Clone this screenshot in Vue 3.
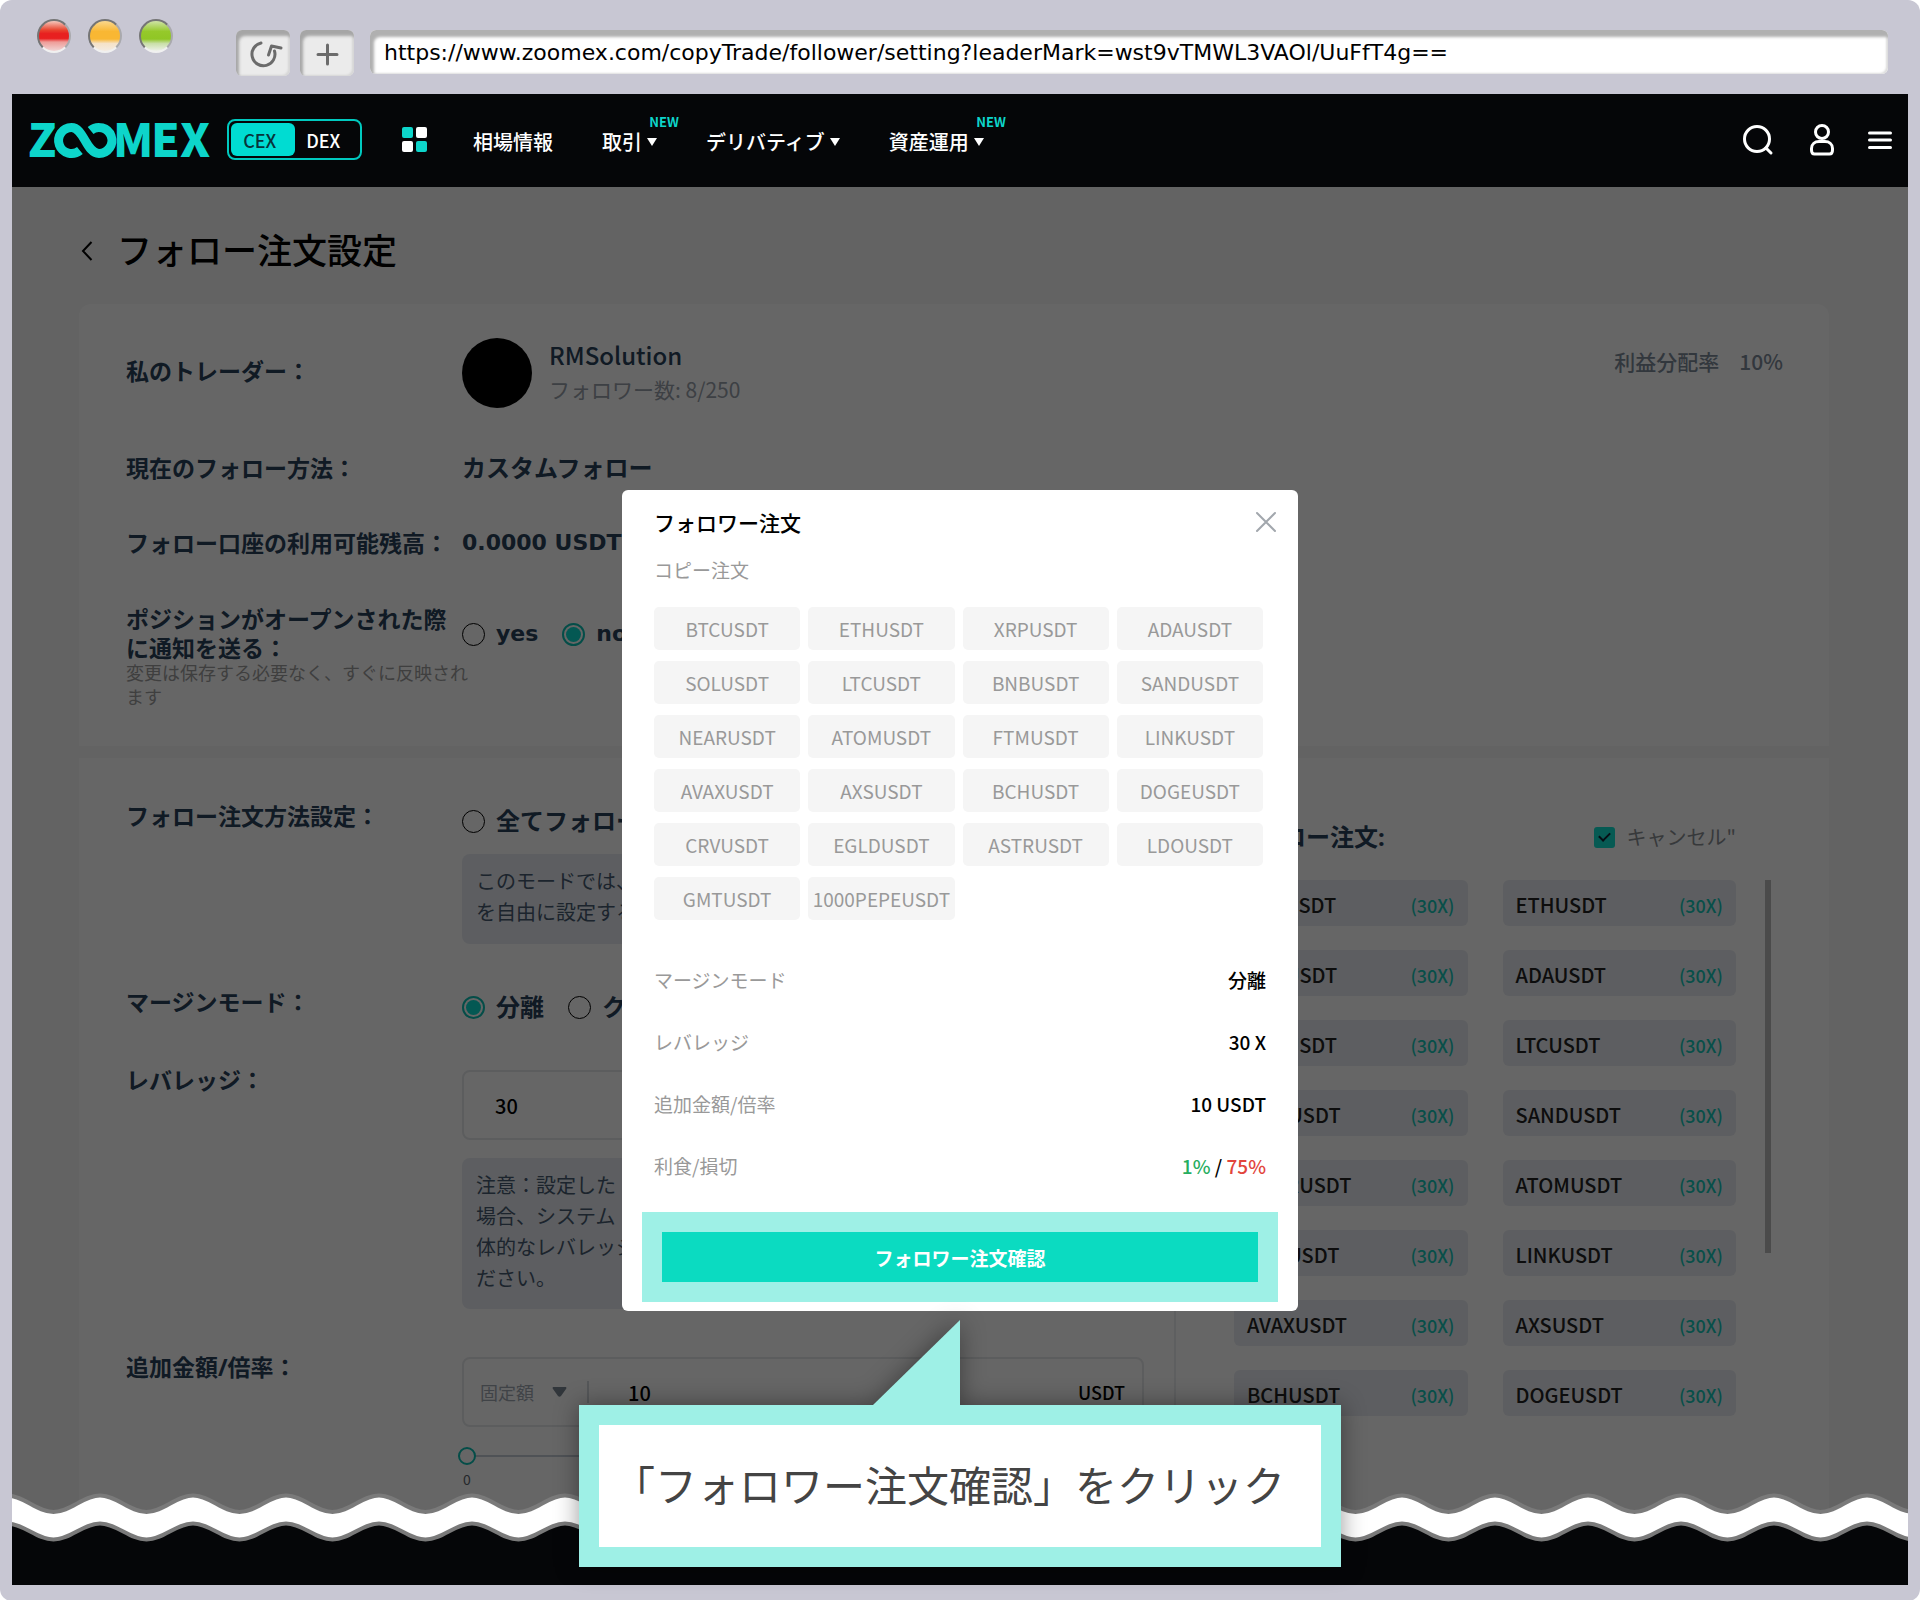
<script setup>
const url = 'https://www.zoomex.com/copyTrade/follower/setting?leaderMark=wst9vTMWL3VAOl/UuFfT4g=='

const nav = [
  { label: '相場情報' },
  { label: '取引', menu: true, fresh: true },
  { label: 'デリバティブ', menu: true },
  { label: '資産運用', menu: true, fresh: true },
]

const orderPairs = [
  'BTCUSDT', 'ETHUSDT', 'XRPUSDT', 'ADAUSDT',
  'SOLUSDT', 'LTCUSDT', 'BNBUSDT', 'SANDUSDT',
  'NEARUSDT', 'ATOMUSDT', 'FTMUSDT', 'LINKUSDT',
  'AVAXUSDT', 'AXSUSDT', 'BCHUSDT', 'DOGEUSDT',
  'CRVUSDT', 'EGLDUSDT', 'ASTRUSDT', 'LDOUSDT',
  'GMTUSDT', '1000PEPEUSDT',
]
const listedPairs = orderPairs.slice(0, 16)
</script>

<template>
  <div class="browser">
    <div class="chrome">
      <div class="lights">
        <span class="light red"></span>
        <span class="light amber"></span>
        <span class="light green"></span>
      </div>
      <div class="tools">
        <button class="tool" type="button" aria-label="再読み込み">
          <svg width="32" height="32" viewBox="0 0 32 32" fill="none" stroke="#6b6b6b" stroke-width="3" stroke-linecap="round" stroke-linejoin="round">
            <path d="M14 6A11.500 11.500 0 1 0 27.500 14" />
            <path d="M21.500 18L24.500 9L34 11" />
          </svg>
        </button>
        <button class="tool" type="button" aria-label="新しいタブ">
          <svg width="32" height="32" viewBox="0 0 32 32" stroke="#6b6b6b" stroke-width="3" stroke-linecap="round">
            <path d="M7 17.500H26M16.500 8V27" />
          </svg>
        </button>
      </div>
      <input class="url" type="text" :value="url" aria-label="URL" />
    </div>

    <div class="viewport">
      <header class="topbar">
        <a class="logo" href="#" aria-label="ZOOMEX">
          <svg width="192" height="60" viewBox="0 0 192 60" fill="#0dd5ca">
            <text x="8" y="47">Z</text>
            <path d="M59.900 40.500A13 13 0 1 1 51.500 17.500C64 17.500 66 43.500 79 43.500A13 13 0 1 0 70.600 20.500" fill="none" stroke="#0dd5ca" stroke-width="9" />
            <text x="93" y="47">M</text>
            <text x="131" y="47">E</text>
            <text x="160" y="47">X</text>
          </svg>
        </a>
        <div class="switch">
          <button class="on" type="button">CEX</button>
          <button type="button">DEX</button>
        </div>
        <svg class="apps" width="25" height="25" viewBox="0 0 25 25">
          <rect width="11" height="11" rx="2" fill="#0dd5ca" />
          <rect x="14" width="11" height="11" rx="2" fill="#fff" />
          <rect y="14" width="11" height="11" rx="2" fill="#fff" />
          <rect x="14" y="14" width="11" height="11" rx="2" fill="#0dd5ca" />
        </svg>
        <nav class="nav">
          <a v-for="item in nav" :key="item.label" href="#">
            {{ item.label }}
            <svg v-if="item.menu" width="10" height="8" viewBox="0 0 10 8" fill="#fff"><path d="M0 0H10L5 8Z" /></svg>
            <sup v-if="item.fresh">NEW</sup>
          </a>
        </nav>
        <div class="actions">
          <button type="button" aria-label="検索">
            <svg width="32" height="34" viewBox="0 0 32 34" fill="none" stroke="#fff" stroke-width="3" stroke-linecap="round">
              <circle cx="15" cy="16" r="12.500" /><path d="M24 25L29 30" />
            </svg>
          </button>
          <button type="button" aria-label="アカウント">
            <svg width="26" height="34" viewBox="0 0 26 34" fill="none" stroke="#fff" stroke-width="3">
              <circle cx="14" cy="9" r="6.500" />
              <path d="M3.500 27V25.500C3.500 21 7 18.500 11 18.500H17C21 18.500 24.500 21 24.500 25.500V27C24.500 29.500 24 31 21.500 31H6.500C4 31 3.500 29.500 3.500 27Z" />
            </svg>
          </button>
          <button type="button" aria-label="メニュー">
            <svg width="24" height="34" viewBox="0 0 24 34" stroke="#fff" stroke-width="3" stroke-linecap="round">
              <path d="M1.500 10H22.500M1.500 17H22.500M1.500 24.500H22.500" />
            </svg>
          </button>
        </div>
      </header>

      <main class="page">
        <div class="heading">
          <a href="#" aria-label="戻る">
            <svg width="12" height="20" viewBox="0 0 12 20" fill="none" stroke="#000" stroke-width="2"><path d="M10.500 3L2 12L10.500 21" /></svg>
          </a>
          <h1>フォロー注文設定</h1>
        </div>

        <section class="card summary">
          <div class="row middle">
            <div class="label">私のトレーダー：</div>
            <span class="avatar"></span>
            <div class="trader">
              <strong>RMSolution</strong>
              <span>フォロワー数: 8/250</span>
            </div>
            <div class="share"><span>利益分配率</span><span>10%</span></div>
          </div>
          <div class="row">
            <div class="label">現在のフォロー方法：</div>
            <div class="value">カスタムフォロー</div>
          </div>
          <div class="row">
            <div class="label">フォロー口座の利用可能残高：</div>
            <div class="value latin">0.0000 USDT</div>
          </div>
          <div class="row">
            <div class="label">
              <div class="two">ポジションがオープンされた際<br />に通知を送る：</div>
              <div class="hint">変更は保存する必要なく、すぐに反映され<br />ます</div>
            </div>
            <div class="radios latin notify">
              <label><input type="radio" name="notify" />yes</label>
              <label><input type="radio" name="notify" checked />no</label>
            </div>
          </div>
        </section>

        <section class="card settings">
          <div class="form">
            <div class="row">
              <div class="label">フォロー注文方法設定：</div>
              <div class="control">
                <div class="radios"><label><input type="radio" name="method" />全てフォロー</label></div>
                <p class="note short">このモードでは、<br />を自由に設定する</p>
              </div>
            </div>
            <div class="row">
              <div class="label">マージンモード：</div>
              <div class="control">
                <div class="radios">
                  <label><input type="radio" name="margin" checked />分離</label>
                  <label><input type="radio" name="margin" />クロス</label>
                </div>
              </div>
            </div>
            <div class="row">
              <label class="label" for="leverage">レバレッジ：</label>
              <div class="control">
                <div class="field"><input id="leverage" type="text" value="30" /></div>
                <p class="note">注意：設定した<br />場合、システム<br />体的なレバレッジ<br />ださい。</p>
              </div>
            </div>
            <div class="row">
              <label class="label" for="amount">追加金額/倍率：</label>
              <div class="control">
                <div class="field amount">
                  <div class="pick">
                    <select aria-label="金額の種類"><option>固定額</option></select>
                    <svg width="15" height="10" viewBox="0 0 15 10" fill="#7c8894"><path d="M1 0H14Q15 1 14 2L9 9Q7.500 10.500 6 9L1 2Q0 1 1 0Z" /></svg>
                  </div>
                  <input id="amount" type="text" value="10" />
                  <span>USDT</span>
                </div>
                <div class="slide">
                  <input type="range" min="0" max="100" value="0" aria-label="追加金額" />
                  <span>0</span>
                </div>
              </div>
            </div>
          </div>

          <div class="pairs">
            <div class="pairs-head">
              <h2>フォロー注文:</h2>
              <label><input type="checkbox" checked />キャンセル"</label>
            </div>
            <div class="scroller">
              <ul>
                <li v-for="pair in listedPairs" :key="pair">
                  <span>{{ pair }}</span><em>(30X)</em>
                </li>
              </ul>
              <span class="thumb"></span>
            </div>
          </div>
        </section>

        <div class="scrim"></div>

        <svg class="tear" width="100%" height="92">
          <defs>
            <pattern id="wave" x="-5" width="93" height="93" patternUnits="userSpaceOnUse">
              <path d="M-5 2.500H0C17 2.500 29.500 19 46.500 19S76 2.500 93 2.500H98V46.500H93C76 46.500 63.500 46.500 46.500 46.500H-5Z" fill="#fff" />
              <path d="M0 30.500C17 30.500 29.500 46.500 46.500 46.500S76 30.500 93 30.500V94H0Z" fill="#050608" />
              <path d="M-5 2.500H0C17 2.500 29.500 19 46.500 19S76 2.500 93 2.500H98M-5 30.500H0C17 30.500 29.500 46.500 46.500 46.500S76 30.500 93 30.500H98" fill="none" stroke="#7a7a7a" stroke-width="4" />
            </pattern>
          </defs>
          <rect width="100%" height="93" fill="url(#wave)" />
        </svg>

        <div class="overlay">
          <div class="dialog" role="dialog" aria-labelledby="dialog-title">
            <div class="dialog-head">
              <h2 id="dialog-title">フォロワー注文</h2>
              <button type="button" aria-label="閉じる">
                <svg width="20" height="20" viewBox="0 0 20 20" stroke="#a2a7ad" stroke-width="2" stroke-linecap="round"><path d="M1 1L19 19M19 1L1 19" /></svg>
              </button>
            </div>
            <h3>コピー注文</h3>
            <ul class="chips">
              <li v-for="pair in orderPairs" :key="pair">{{ pair }}</li>
            </ul>
            <dl class="facts">
              <div><dt>マージンモード</dt><dd>分離</dd></div>
              <div><dt>レバレッジ</dt><dd>30 X</dd></div>
              <div><dt>追加金額/倍率</dt><dd>10 USDT</dd></div>
              <div><dt>利食/損切</dt><dd><span class="gain">1%</span> / <span class="loss">75%</span></dd></div>
            </dl>
            <div class="highlight">
              <button type="button">フォロワー注文確認</button>
            </div>
          </div>
          <div class="callout">
            <svg class="tail" width="87" height="85" viewBox="0 0 87 85"><path d="M87 0V85H0Z" fill="#9ef0e6" /></svg>
            <p>「フォロワー注文確認」をクリック</p>
          </div>
        </div>
      </main>
    </div>
  </div>
</template>

<style>
body {
  margin: 0;
  background: #fff;
}
</style>

<style scoped>
* {
  box-sizing: border-box;
}
h1, h2, h3, p, ul, dl, dd {
  margin: 0;
  padding: 0;
}
ul {
  list-style: none;
}
button, input, select {
  font: inherit;
  color: inherit;
  border: 0;
  padding: 0;
  margin: 0;
  background: none;
}
a {
  color: inherit;
  text-decoration: none;
}
svg {
  display: block;
  overflow: visible;
}
.browser {
  display: flex;
  flex-direction: column;
  min-height: 100vh;
  padding: 0 12px 16px;
  border-radius: 12px;
  background: #c8c7d3;
  font-family: "Noto Sans CJK JP", sans-serif;
  color: #000;
}

/* window chrome */
.chrome {
  display: flex;
  align-items: flex-start;
  height: 94px;
  padding: 0 20px 0 25px;
}
.lights {
  display: flex;
  gap: 17px;
  padding-top: 19px;
}
.light {
  width: 34px;
  height: 34px;
  border-radius: 50%;
  border: 2px solid;
  border-color: #757575 #a9a9ad #f0f0f0 #757575;
}
.red {
  background: linear-gradient(#f5c8bd, #e8452f 30%, #e82020 42%, #e82020 58%, #ee9c98 70%, #f0d6d6);
}
.amber {
  background: linear-gradient(#fbd88d, #f9b733 35%, #f9b733 60%, #f5e2c8 75%, #f3ebe2);
}
.green {
  background: linear-gradient(#cfe3a6, #95c92a 35%, #90c625 60%, #c9dfa8 75%, #eef1ea);
}
.tools {
  display: flex;
  gap: 10px;
  margin-left: 63px;
  padding-top: 30px;
}
.tool {
  display: grid;
  place-items: center;
  width: 54px;
  height: 46px;
  border-radius: 6px;
  background: #ebebeb;
  box-shadow: inset 3px 6px 3px #a6a6a6, inset -2px -1px 2px #d6d6d6;
}
.url {
  flex: 1;
  height: 44px;
  margin: 30px 0 0 16px;
  padding: 0 14px;
  border-radius: 6px;
  background: #fff;
  box-shadow: inset 4px 7px 3px #b0b0b0, inset -2px -1px 2px #ddd;
  font-family: "DejaVu Sans", sans-serif;
  font-size: 22px;
}

/* site header */
.viewport {
  flex: 1;
  display: flex;
  flex-direction: column;
}
.topbar {
  display: flex;
  align-items: center;
  height: 93px;
  padding: 0 16px 2px 8px;
  background: #050608;
  color: #fff;
}
.logo text {
  font-size: 46px;
  font-weight: 900;
}
.switch {
  display: flex;
  width: 135px;
  height: 41px;
  margin-left: 15px;
  padding: 2px;
  border: 2px solid #00c9bf;
  border-radius: 8px;
  font-size: 18px;
  font-weight: 500;
}
.switch button {
  width: 64px;
  padding-right: 6px;
}
.switch .on {
  border-radius: 6px;
  background: #00dcd2;
  color: #07343a;
}
.apps {
  margin-left: 40px;
}
.nav {
  display: flex;
  gap: 49px;
  margin: 4px 0 0 46px;
  font-size: 20px;
  font-weight: 500;
}
.nav a {
  position: relative;
  display: flex;
  align-items: center;
  gap: 5px;
}
.nav sup {
  position: absolute;
  right: -22px;
  top: -13px;
  font-size: 13px;
  line-height: 16px;
  font-weight: 700;
  color: #0dd5ca;
}
.actions {
  display: flex;
  align-items: center;
  gap: 34px;
  margin-left: auto;
}

/* page */
.page {
  position: relative;
  flex: 1;
  display: flex;
  flex-direction: column;
  padding: 0 79px 0 67px;
  background: #f8f8f8;
}
.heading {
  display: flex;
  align-items: center;
  gap: 24px;
  height: 117px;
  padding: 7px 0 0 2px;
}
h1 {
  font-size: 35px;
  line-height: 50px;
  font-weight: 500;
}
.card {
  background: #fff;
}
.summary {
  display: flex;
  flex-direction: column;
  gap: 45px;
  padding: 34px 46px 37px 47px;
  border-radius: 12px 12px 0 0;
}
.row {
  display: flex;
  align-items: flex-start;
}
.middle {
  align-items: center;
}
.middle .label {
  padding-bottom: 4px;
}
.label {
  flex: none;
  width: 336px;
  white-space: nowrap;
}
.label, .value, .radios, .pairs h2 {
  font-family: "Noto Sans", "Noto Sans CJK JP", sans-serif;
  font-size: 23px;
  line-height: 30px;
  font-weight: 700;
  color: #28415a;
}
.value, .radios, .pairs h2 {
  font-size: 24px;
}
.latin {
  font-family: "DejaVu Sans", sans-serif;
  font-size: 22px;
}
.avatar {
  width: 70px;
  height: 70px;
  border-radius: 50%;
  background: #000;
}
.trader {
  display: flex;
  flex-direction: column;
  margin: 0 0 2px 17px;
  line-height: 34px;
}
.trader strong {
  font-size: 24px;
  font-weight: 500;
  color: #28415a;
}
.trader span {
  font-size: 21px;
  color: #98a0aa;
}
.share {
  display: flex;
  gap: 20px;
  margin: 0 0 24px auto;
  font-size: 21px;
  font-weight: 500;
  color: #7d8b9a;
}
.two {
  padding-top: 2px;
  line-height: 29px;
}
.hint {
  margin-top: -2px;
  font-size: 18px;
  line-height: 24px;
  font-weight: 400;
  color: #9d9d9d;
}
.radios {
  display: flex;
  gap: 24px;
}
.radios label {
  display: flex;
  align-items: center;
  gap: 11px;
  white-space: nowrap;
}
.notify {
  margin-top: 16px;
}
.radios input {
  appearance: none;
  display: grid;
  place-items: center;
  width: 23px;
  height: 23px;
  border: 1px solid #000;
  border-radius: 50%;
}
.radios input:checked {
  border: 2px solid #0bc0b4;
}
.radios input:checked::before {
  content: "";
  width: 15px;
  height: 15px;
  border-radius: 50%;
  background: #0bdccf;
}
.settings {
  flex: 1;
  display: flex;
  margin-top: 12px;
}
.form {
  flex: 1;
  display: flex;
  flex-direction: column;
  gap: 43px;
  padding: 43px 30px 93px 47px;
  border-right: 2px solid #eceef0;
}
.control {
  flex: 1;
  padding-top: 5px;
}
.note {
  margin-top: 18px;
  padding: 11px 14px;
  height: 151px;
  border-radius: 8px;
  background: #e8ecf2;
  font-size: 20px;
  line-height: 31px;
  color: #465a70;
}
.short {
  height: 90px;
}
.field {
  display: flex;
  align-items: center;
  height: 70px;
  padding: 0 17px 0 31px;
  border: 2px solid #e6e8ea;
  border-radius: 8px;
  font-size: 20px;
  font-weight: 500;
}
.field input {
  flex: 1;
  min-width: 0;
}
.amount {
  padding-left: 16px;
}
.amount > span {
  font-size: 18px;
}
.pick {
  display: flex;
  align-items: center;
  width: 109px;
  height: 22px;
  margin-right: 39px;
  border-right: 2px solid #d5dade;
  color: #a0a8b2;
  font-size: 18px;
  font-weight: 400;
}
.pick select {
  appearance: none;
  width: 72px;
}
.slide {
  display: flex;
  flex-direction: column;
  margin: 19px 0 0 -4px;
}
.slide input {
  appearance: none;
  height: 20px;
  background: linear-gradient(#c5cdd6, #c5cdd6) 0 50% / 100% 2px no-repeat;
}
.slide input::-webkit-slider-thumb {
  appearance: none;
  width: 18px;
  height: 18px;
  border: 2px solid #0bc0b4;
  border-radius: 50%;
  background: #fff;
}
.slide span {
  width: 18px;
  font-size: 14px;
  line-height: 26px;
  text-align: center;
  color: #5c6670;
}
.pairs {
  width: 653px;
  padding: 64px 57px 0 58px;
}
.pairs-head {
  display: flex;
  justify-content: space-between;
  width: 502px;
  margin-bottom: 28px;
}
.pairs-head label {
  display: flex;
  align-items: center;
  gap: 12px;
  font-size: 20px;
  line-height: 30px;
  color: #8a8f94;
}
.pairs-head input {
  appearance: none;
  display: grid;
  place-items: center;
  width: 21px;
  height: 21px;
  border-radius: 3px;
  background: #11e0d0;
}
.pairs-head input::before {
  content: "";
  width: 9px;
  height: 5px;
  margin-bottom: 3px;
  border: solid #123;
  border-width: 0 0 2px 2px;
  transform: rotate(-45deg);
}
.scroller {
  display: flex;
  gap: 29px;
}
.scroller ul {
  display: grid;
  grid-template-columns: 1fr 1fr;
  gap: 24px 35px;
  width: 502px;
}
.scroller li {
  display: flex;
  align-items: center;
  justify-content: space-between;
  height: 46px;
  padding: 3px 13px 0;
  border-radius: 6px;
  background: #e8ecf2;
  font-size: 20px;
  font-weight: 500;
  color: #222;
}
.scroller em {
  font-style: normal;
  font-size: 18px;
  color: #14c5b6;
}
.thumb {
  width: 6px;
  height: 373px;
  background: #bbb;
}
.scrim {
  position: absolute;
  inset: 0;
  background: rgba(0, 0, 0, 0.6);
}
.tear {
  position: absolute;
  left: 0;
  bottom: 0;
  overflow: hidden;
}

/* dialog and callout */
.overlay {
  position: absolute;
  inset: 0;
  display: flex;
  flex-direction: column;
  align-items: center;
  padding-top: 303px;
}
.dialog {
  width: 676px;
  padding: 14px 20px 9px;
  border-radius: 6px;
  background: #fff;
}
.dialog-head {
  display: flex;
  align-items: center;
  justify-content: space-between;
  padding: 0 2px 0 12px;
}
.dialog h2 {
  font-size: 21px;
  line-height: 36px;
  font-weight: 500;
}
.dialog h3 {
  margin-top: 15px;
  padding-left: 12px;
  font-size: 19px;
  line-height: 30px;
  font-weight: 400;
  color: #999;
}
.chips {
  display: grid;
  grid-template-columns: repeat(4, 1fr);
  gap: 11px 8px;
  padding: 22px 15px 0 12px;
}
.chips li {
  height: 43px;
  border-radius: 5px;
  background: #f5f5f5;
  font-size: 19px;
  line-height: 43px;
  text-align: center;
  color: #999;
}
.facts {
  padding: 29px 12px 15px;
  font-size: 19px;
  line-height: 62px;
}
.facts div {
  display: flex;
  justify-content: space-between;
}
.facts dt {
  color: #999;
}
.facts dd {
  font-weight: 500;
}
.gain {
  color: #27ae60;
}
.loss {
  color: #e2453c;
}
.highlight {
  padding: 20px;
  background: #9ef0e6;
}
.highlight button {
  display: block;
  width: 100%;
  height: 50px;
  background: #0bdbc1;
  color: #fff;
  font-size: 19px;
  font-weight: 700;
}
.callout {
  position: relative;
  width: 762px;
  margin-top: 94px;
  border: 20px solid #9ef0e6;
  background: #fff;
  filter: drop-shadow(0 0 12px rgba(0, 0, 0, 0.4));
}
.callout p {
  padding: 0 22px 4px 0;
  font-size: 42px;
  line-height: 118px;
  text-align: center;
  white-space: nowrap;
  color: #444;
}
.tail {
  position: absolute;
  right: 50%;
  bottom: calc(100% + 20px);
}
</style>
